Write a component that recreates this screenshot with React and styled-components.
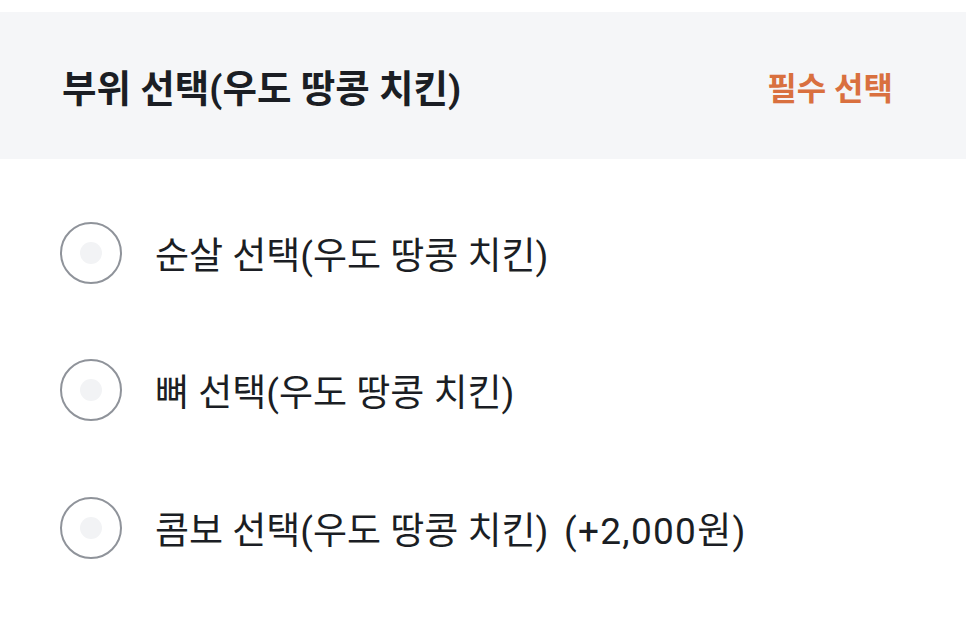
import React from 'react'
import styled, { createGlobalStyle } from 'styled-components'

const GlobalStyle = createGlobalStyle`
  html, body {
    margin: 0;
    padding: 0;
    background: #fff;
  }
  body {
    font-family: Roboto, 'Noto Sans CJK KR', 'Noto Sans', sans-serif;
  }
`

const Page = styled.div`
  width: 966px;
  padding-top: 12px;
  background: #fff;
`

const Header = styled.div`
  height: 147px;
  background-color: #f5f6f8;
  display: flex;
  align-items: center;
  justify-content: space-between;
  padding: 0 73px 0 62px;
`

const Title = styled.div`
  font-size: 37.5px;
  font-weight: 700;
  color: #1b1e24;
`

const Badge = styled.div`
  font-size: 32px;
  font-weight: 700;
  color: #d9703f;
`

const List = styled.div`
  display: flex;
  flex-direction: column;
  padding-top: 25px;
`

const Row = styled.label`
  height: 137.5px;
  display: flex;
  align-items: center;
  gap: 33px;
  padding-left: 60px;
  cursor: pointer;
`

const Radio = styled.span`
  width: 58px;
  height: 58px;
  border: 2px solid #8f939a;
  border-radius: 50%;
  display: flex;
  align-items: center;
  justify-content: center;
  flex-shrink: 0;
  &::after {
    content: '';
    width: 22px;
    height: 22px;
    border-radius: 50%;
    background: #f2f3f5;
  }
`

const Label = styled.span`
  font-size: 37px;
  font-weight: 400;
  color: #1b1e24;
`

const Price = styled.span`
  margin-left: 5px;
  letter-spacing: 1.3px;
`

const options = [
  { name: '순살 선택(우도 땅콩 치킨)' },
  { name: '뼈 선택(우도 땅콩 치킨)' },
  { name: '콤보 선택(우도 땅콩 치킨)', price: '(+2,000원)' },
]

const App = () => {
  return (
    <Page>
      <GlobalStyle />
      <Header>
        <Title>부위 선택(우도 땅콩 치킨)</Title>
        <Badge>필수 선택</Badge>
      </Header>
      <List>
        {options.map((o) => (
          <Row key={o.name}>
            <Radio />
            <Label>
              {o.name}
              {o.price && <Price> {o.price}</Price>}
            </Label>
          </Row>
        ))}
      </List>
    </Page>
  )
}

export default App
